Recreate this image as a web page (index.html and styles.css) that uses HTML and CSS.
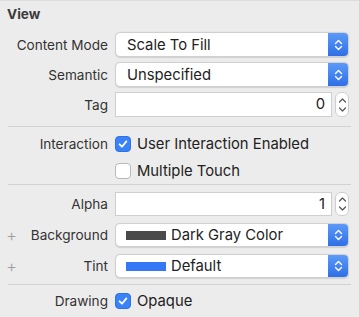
FILE: index.html
```html
<!DOCTYPE html>
<html lang="en">
<head>
    <meta charset="UTF-8">
    <title>View Inspector</title>
    <link rel="stylesheet" href="styles.css">
</head>
<body>
    <div class="inspector">
        <div class="section-title">View</div>

        <div class="section section-top">
            <div class="row">
                <span class="label">Content Mode</span>
                <div class="popup">
                    <span class="popup-text">Scale To Fill</span>
                    <span class="popup-arrows">
                        <svg width="9" height="12" viewBox="0 0 9 12"><path d="M1.5 4.5 L4.5 1.5 L7.5 4.5 M1.5 7.5 L4.5 10.5 L7.5 7.5" fill="none" stroke="#fff" stroke-width="1.4" stroke-linecap="round" stroke-linejoin="round"/></svg>
                    </span>
                </div>
            </div>
            <div class="row">
                <span class="label">Semantic</span>
                <div class="popup">
                    <span class="popup-text">Unspecified</span>
                    <span class="popup-arrows">
                        <svg width="9" height="12" viewBox="0 0 9 12"><path d="M1.5 4.5 L4.5 1.5 L7.5 4.5 M1.5 7.5 L4.5 10.5 L7.5 7.5" fill="none" stroke="#fff" stroke-width="1.4" stroke-linecap="round" stroke-linejoin="round"/></svg>
                    </span>
                </div>
            </div>
            <div class="row">
                <span class="label">Tag</span>
                <div class="field-group">
                    <div class="field">0</div>
                    <div class="stepper">
                        <svg width="9" height="20" viewBox="0 0 9 20"><path d="M1.5 7 L4.5 4 L7.5 7 M1.5 13 L4.5 16 L7.5 13" fill="none" stroke="#555" stroke-width="1.2" stroke-linecap="round" stroke-linejoin="round"/></svg>
                    </div>
                </div>
            </div>
        </div>

        <div class="sep"></div>

        <div class="section section-checks">
            <div class="row row-check">
                <span class="label">Interaction</span>
                <label class="check">
                    <span class="box box-on">
                        <svg width="12" height="12" viewBox="0 0 12 12"><path d="M2.6 6.3 L5 8.7 L9.4 3.4" fill="none" stroke="#fff" stroke-width="1.8" stroke-linecap="round" stroke-linejoin="round"/></svg>
                    </span>
                    User Interaction Enabled
                </label>
            </div>
            <div class="row row-check">
                <span class="label"></span>
                <label class="check">
                    <span class="box"></span>
                    Multiple Touch
                </label>
            </div>
        </div>

        <div class="sep"></div>

        <div class="section section-colors">
            <div class="row">
                <span class="label">Alpha</span>
                <div class="field-group">
                    <div class="field">1</div>
                    <div class="stepper">
                        <svg width="9" height="20" viewBox="0 0 9 20"><path d="M1.5 7 L4.5 4 L7.5 7 M1.5 13 L4.5 16 L7.5 13" fill="none" stroke="#555" stroke-width="1.2" stroke-linecap="round" stroke-linejoin="round"/></svg>
                    </div>
                </div>
            </div>
            <div class="row">
                <span class="plus">+</span>
                <span class="label">Background</span>
                <div class="popup">
                    <span class="swatch swatch-gray"></span>
                    <span class="popup-text">Dark Gray Color</span>
                    <span class="popup-arrows">
                        <svg width="9" height="12" viewBox="0 0 9 12"><path d="M1.5 4.5 L4.5 1.5 L7.5 4.5 M1.5 7.5 L4.5 10.5 L7.5 7.5" fill="none" stroke="#fff" stroke-width="1.4" stroke-linecap="round" stroke-linejoin="round"/></svg>
                    </span>
                </div>
            </div>
            <div class="row">
                <span class="plus">+</span>
                <span class="label">Tint</span>
                <div class="popup">
                    <span class="swatch swatch-blue"></span>
                    <span class="popup-text">Default</span>
                    <span class="popup-arrows">
                        <svg width="9" height="12" viewBox="0 0 9 12"><path d="M1.5 4.5 L4.5 1.5 L7.5 4.5 M1.5 7.5 L4.5 10.5 L7.5 7.5" fill="none" stroke="#fff" stroke-width="1.4" stroke-linecap="round" stroke-linejoin="round"/></svg>
                    </span>
                </div>
            </div>
        </div>

        <div class="sep"></div>

        <div class="section section-drawing">
            <div class="row row-check">
                <span class="label">Drawing</span>
                <label class="check">
                    <span class="box box-on">
                        <svg width="12" height="12" viewBox="0 0 12 12"><path d="M2.6 6.3 L5 8.7 L9.4 3.4" fill="none" stroke="#fff" stroke-width="1.8" stroke-linecap="round" stroke-linejoin="round"/></svg>
                    </span>
                    Opaque
                </label>
            </div>
        </div>
    </div>
</body>
</html>
```

FILE: styles.css
```css
body {
    margin: 0;
    padding: 0;
    background-color: #ececec;
    font-family: 'Inter', 'Liberation Sans', sans-serif;
    font-size: 13.6px;
    color: #2a2a2a;
}
.inspector {
    width: 359px;
    height: 317px;
    border-top: 1px solid #dcdcdc;
    box-sizing: border-box;
}
.section-title {
    height: 27px;
    line-height: 27px;
    padding-left: 7px;
    font-weight: 700;
    color: #3a3a3a;
}
.section {
    display: flex;
    flex-direction: column;
}
.section-top {
    padding: 4px 0 9px;
    gap: 5px;
}
.section-checks {
    padding-top: 3px;
}
.section-colors {
    padding: 7px 0 6px;
    gap: 7px;
}
.section-drawing {
    padding-top: 2px;
}
.sep {
    height: 1px;
    margin: 0 8px;
    background-color: #d2d2d2;
}
.row {
    position: relative;
    display: flex;
    align-items: center;
    height: 25px;
}
.section-colors .row {
    height: 24px;
}
.row-check {
    height: 27px;
}
.section-drawing .row-check {
    height: 28px;
}
.label {
    width: 108px;
    flex: none;
    text-align: right;
    color: #333;
    margin-right: 7px;
}
.plus {
    position: absolute;
    left: 6px;
    top: 2px;
    font-size: 17px;
    font-weight: 300;
    color: #a0a0a0;
}
.popup {
    display: flex;
    align-items: center;
    width: 234px;
    height: 100%;
    box-sizing: border-box;
    background: #fff;
    border: 1px solid #d0d0d0;
    border-radius: 5px;
    box-shadow: 0 0.5px 1px rgba(0, 0, 0, 0.12);
    overflow: hidden;
}
.popup-text {
    flex: 1;
    padding-left: 11px;
    font-size: 14.8px;
    color: #222;
}
.swatch {
    width: 40px;
    height: 9px;
    margin-left: 10px;
    margin-right: -6px;
}
.swatch-gray {
    background-color: #4a4a4a;
}
.swatch-blue {
    background-color: #3478f6;
}
.popup-arrows {
    display: flex;
    align-items: center;
    justify-content: center;
    width: 20px;
    height: 100%;
    background: linear-gradient(#5b9af8, #2f6fe6);
}
.field-group {
    display: flex;
    align-items: center;
    height: 100%;
    gap: 3px;
}
.field {
    width: 217px;
    height: 100%;
    box-sizing: border-box;
    background: #fff;
    border: 1px solid #cfcfcf;
    text-align: right;
    padding-right: 6px;
    font-size: 14.8px;
    line-height: 23px;
    color: #222;
}
.stepper {
    display: flex;
    align-items: center;
    justify-content: center;
    width: 14px;
    height: 100%;
    box-sizing: border-box;
    background: #fff;
    border: 1px solid #cfcfcf;
    border-radius: 6px;
}
.check {
    display: flex;
    align-items: center;
    gap: 6px;
    font-size: 14.8px;
    color: #222;
}
.box {
    display: flex;
    align-items: center;
    justify-content: center;
    width: 16px;
    height: 16px;
    box-sizing: border-box;
    background: #fff;
    border: 1px solid #b8b8b8;
    border-radius: 4px;
}
.box-on {
    background: #3a82f7;
    border-color: #2f72e0;
}
```
